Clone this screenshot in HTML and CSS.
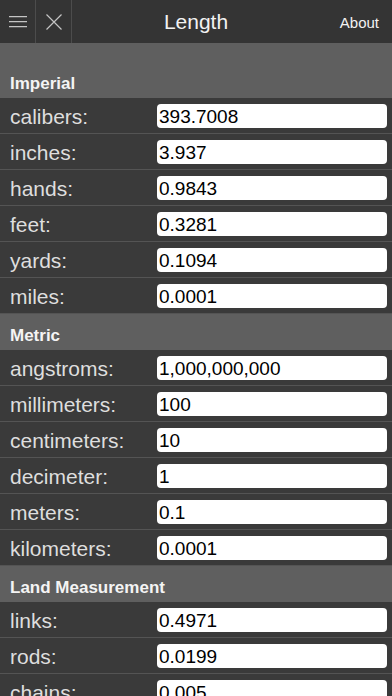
FILE: index.html
```html
<!DOCTYPE html>
<html>
<head>
<meta charset="utf-8">
<title>Length</title>
<link rel="stylesheet" href="styles.css">
</head>
<body>
<div class="app">
  <header class="topbar">
    <div class="left">
      <div class="iconbtn">
        <svg width="18" height="12" viewBox="0 0 18 12"><path d="M0 0.6H18M0 5.6H18M0 10.6H18" stroke="#c4c4c4" stroke-width="1.2" fill="none"/></svg>
      </div>
      <div class="iconbtn">
        <svg width="16" height="16" viewBox="0 0 16 16"><path d="M0.5 0.5L15.5 15.5M15.5 0.5L0.5 15.5" stroke="#c4c4c4" stroke-width="1.2" fill="none"/></svg>
      </div>
    </div>
    <div class="title">Length</div>
    <div class="right"><span class="about">About</span></div>
  </header>

  <section>
    <div class="sechead first">Imperial</div>
    <div class="row"><span class="label">calibers:</span><div class="field">393.7008</div></div>
    <div class="row"><span class="label">inches:</span><div class="field">3.937</div></div>
    <div class="row"><span class="label">hands:</span><div class="field">0.9843</div></div>
    <div class="row"><span class="label">feet:</span><div class="field">0.3281</div></div>
    <div class="row"><span class="label">yards:</span><div class="field">0.1094</div></div>
    <div class="row"><span class="label">miles:</span><div class="field">0.0001</div></div>
  </section>

  <section>
    <div class="sechead">Metric</div>
    <div class="row"><span class="label">angstroms:</span><div class="field">1,000,000,000</div></div>
    <div class="row"><span class="label">millimeters:</span><div class="field">100</div></div>
    <div class="row"><span class="label">centimeters:</span><div class="field">10</div></div>
    <div class="row"><span class="label">decimeter:</span><div class="field">1</div></div>
    <div class="row"><span class="label">meters:</span><div class="field">0.1</div></div>
    <div class="row"><span class="label">kilometers:</span><div class="field">0.0001</div></div>
  </section>

  <section>
    <div class="sechead">Land Measurement</div>
    <div class="row"><span class="label">links:</span><div class="field">0.4971</div></div>
    <div class="row"><span class="label">rods:</span><div class="field">0.0199</div></div>
    <div class="row"><span class="label">chains:</span><div class="field">0.005</div></div>
  </section>
</div>
</body>
</html>
```
FILE: styles.css
```css
html, body {
  margin: 0;
  padding: 0;
  background: #3a3a3a;
}
body {
  font-family: "Liberation Sans", Arial, sans-serif;
  width: 392px;
  height: 696px;
  overflow: hidden;
}
.app {
  display: flex;
  flex-direction: column;
}
.topbar {
  height: 43px;
  background: #343434;
  display: grid;
  grid-template-columns: 1fr auto 1fr;
  align-items: stretch;
}
.left {
  display: flex;
}
.iconbtn {
  width: 35px;
  border-right: 1px solid #4c4c4c;
  display: flex;
  align-items: center;
  justify-content: center;
  padding-top: 1px;
}
.title {
  color: #f2f2f2;
  font-size: 21px;
  line-height: 24px;
  align-self: center;
  padding-top: 1px;
}
.right {
  display: flex;
  justify-content: flex-end;
  align-items: center;
  padding-right: 13px;
  padding-top: 2px;
}
.about {
  color: #f2f2f2;
  font-size: 15px;
}
.sechead {
  background: #5f5f5f;
  color: #f4f4f4;
  font-weight: bold;
  font-size: 17px;
  line-height: 20px;
  padding: 12px 10px 4px;
}
.sechead.first {
  padding-top: 31px;
}
.row {
  height: 35px;
  border-bottom: 1px solid #545454;
  background: #3a3a3a;
  display: flex;
  align-items: center;
}
.label {
  flex: 0 0 157px;
  box-sizing: border-box;
  padding-left: 10px;
  color: #dedede;
  font-size: 21px;
  line-height: 24px;
  padding-top: 2px;
}
.field {
  width: 230px;
  height: 24px;
  box-sizing: border-box;
  background: #ffffff;
  border-radius: 4px;
  color: #000;
  font-size: 19px;
  line-height: 23px;
  padding: 1px 0 0 2px;
}
```
